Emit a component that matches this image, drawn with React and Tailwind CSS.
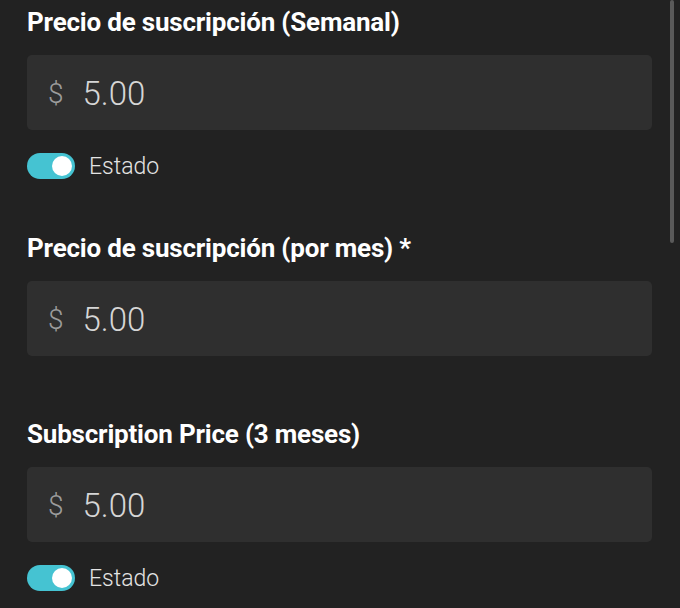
import { useState } from "react";

const font = { fontFamily: "Roboto, 'Liberation Sans', sans-serif" };

function PriceInput({ value }) {
  return (
    <div className="flex h-[75px] items-center rounded-[5px] bg-[#2f2f2f] px-[21px] pt-[2px]">
      <span className="text-[28px] font-light text-[#9c9c9c]">$</span>
      <span className="ml-[19px] text-[33px] font-light text-[#d6d6d6]">{value}</span>
    </div>
  );
}

function Toggle({ on, onChange }) {
  return (
    <button
      onClick={() => onChange(!on)}
      className={`relative h-[26px] w-[48px] shrink-0 rounded-full ${on ? "bg-[#45c3d2]" : "bg-[#555]"}`}
    >
      <span
        className={`absolute top-[3px] h-[20px] w-[20px] rounded-full bg-white ${on ? "left-[25px]" : "left-[3px]"}`}
      />
    </button>
  );
}

function Field({ label, value, toggle, className = "" }) {
  const [on, setOn] = useState(true);
  return (
    <section className={className}>
      <h2 className="text-[26px] font-bold leading-[28px] tracking-[-0.2px] text-white">{label}</h2>
      <div className="mt-[19px]">
        <PriceInput value={value} />
      </div>
      {toggle && (
        <div className="mt-[23px] flex h-[26px] items-center gap-[14px]">
          <Toggle on={on} onChange={setOn} />
          <span className="pt-[3px] text-[23px] font-light text-[#e4e4e4]">Estado</span>
        </div>
      )}
    </section>
  );
}

export default function App() {
  return (
    <div className="flex h-[608px] w-[680px] overflow-hidden bg-[#222222]" style={font}>
      <div className="flex-1 pl-[27px] pr-[18px] pt-[8px]">
        <Field label="Precio de suscripción (Semanal)" value="5.00" toggle />
        <Field label="Precio de suscripción (por mes) *" value="5.00" className="mt-[55px]" />
        <Field label="Subscription Price (3 meses)" value="5.00" toggle className="mt-[64px]" />
      </div>
      {/* scrollbar */}
      <div className="mr-[6px] w-[4px]">
        <div className="h-[243px] rounded-full bg-[#5a5a5a]" />
      </div>
    </div>
  );
}
